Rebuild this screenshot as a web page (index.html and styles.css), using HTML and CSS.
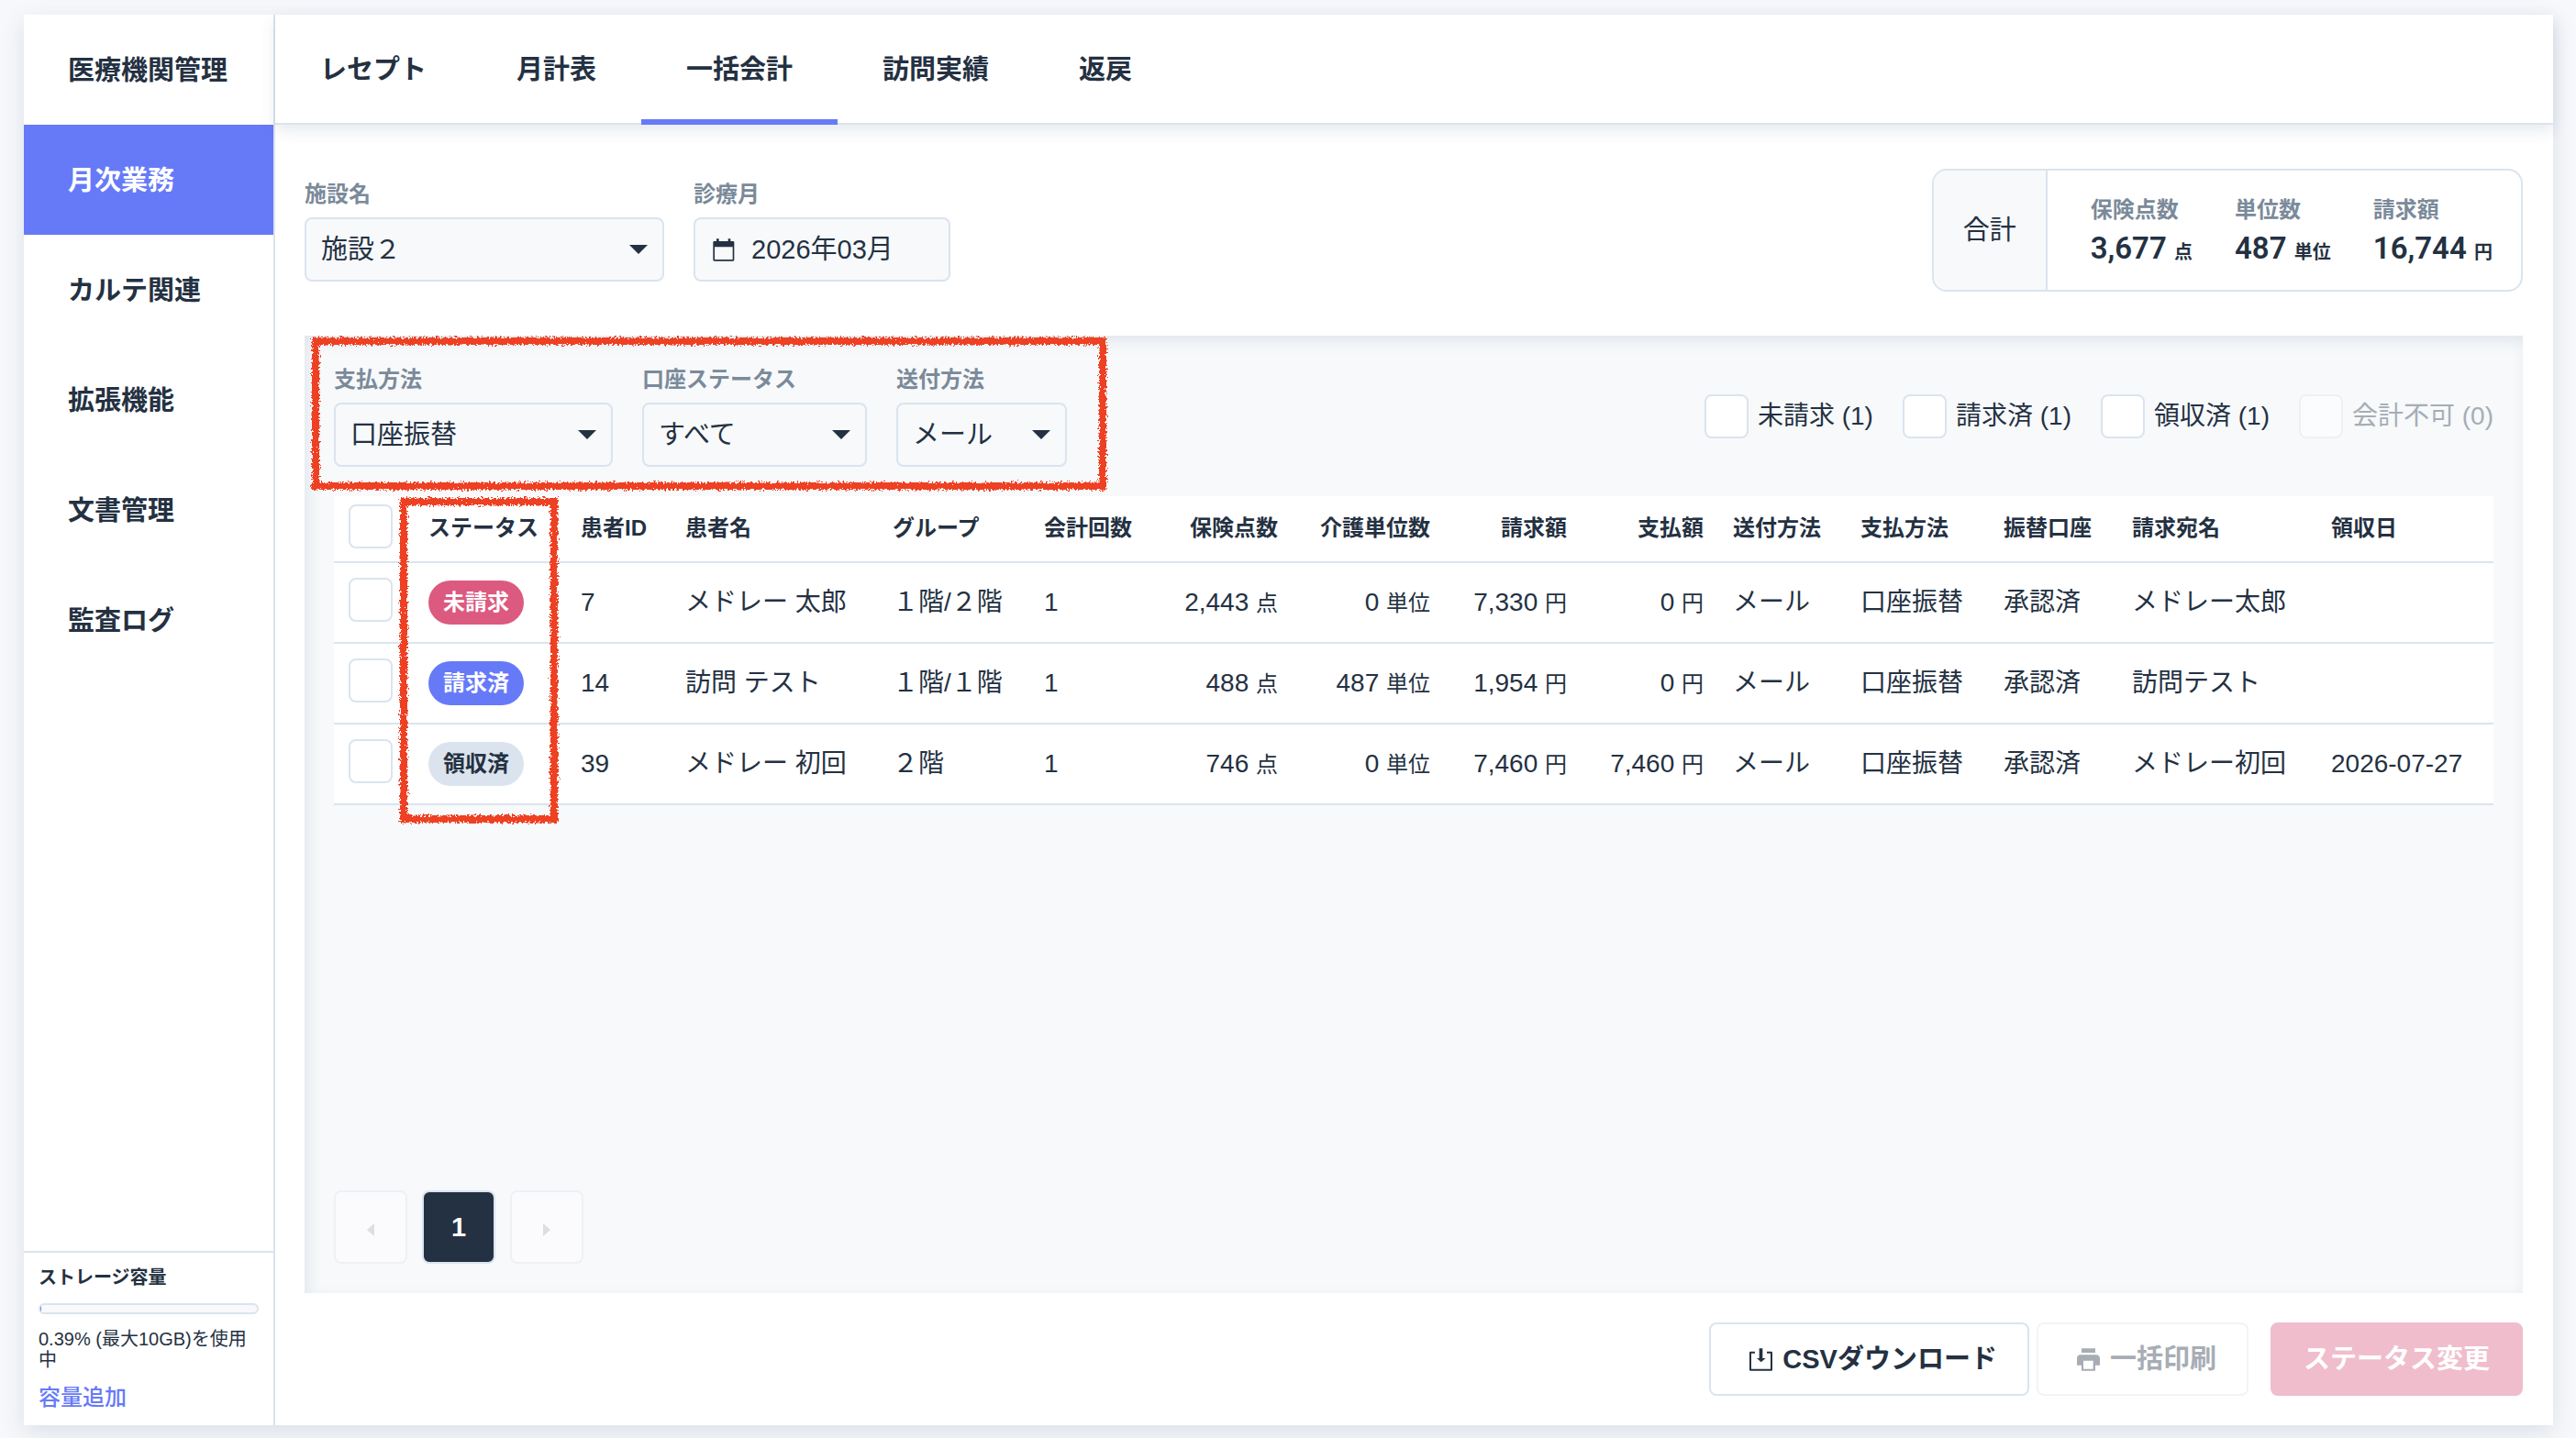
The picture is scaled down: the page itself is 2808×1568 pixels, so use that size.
FILE: index.html
```html
<!DOCTYPE html>
<html lang="ja">
<head>
<meta charset="utf-8">
<title>一括会計</title>
<link rel="stylesheet" href="styles.css">
</head>
<body>
<div class="app">
  <aside class="sidebar">
    <nav class="side-nav">
      <a href="#">医療機関管理</a>
      <a href="#" class="active">月次業務</a>
      <a href="#">カルテ関連</a>
      <a href="#">拡張機能</a>
      <a href="#">文書管理</a>
      <a href="#">監査ログ</a>
    </nav>
    <div class="storage">
      <div class="storage-title">ストレージ容量</div>
      <div class="bar"><div class="bar-fill" style="width:0.39%"></div></div>
      <p class="storage-text">0.39% (最大10GB)を使用中</p>
      <a href="#" class="storage-link">容量追加</a>
    </div>
  </aside>
  <div class="content">
    <nav class="tabs">
      <a href="#">レセプト</a>
      <a href="#">月計表</a>
      <a href="#" class="active">一括会計</a>
      <a href="#">訪問実績</a>
      <a href="#">返戻</a>
    </nav>
    <main class="main">
      <div class="top">
        <div class="filters">
          <div class="field facility">
            <label for="facility">施設名</label>
            <div class="select"><select id="facility"><option>施設２</option></select></div>
          </div>
          <div class="field month">
            <label for="month">診療月</label>
            <div class="date">
              <svg width="24" height="25" viewBox="0 0 72 75"><path fill="currentColor" fill-rule="evenodd" d="M4 9h8V1h8v8h30V1h8v8h8q4 0 4 4v57q0 4-4 4H5q-4 0-4-4V13q0-4 3-4zM6 28v41h59V28z"/></svg>
              <input id="month" type="text" value="2026年03月">
            </div>
          </div>
        </div>
        <section class="summary">
          <div class="summary-title">合計</div>
          <dl class="stats">
            <div><dt>保険点数</dt><dd>3,677 <small>点</small></dd></div>
            <div><dt>単位数</dt><dd>487 <small>単位</small></dd></div>
            <div><dt>請求額</dt><dd>16,744 <small>円</small></dd></div>
          </dl>
        </section>
      </div>
      <section class="panel">
        <div class="panel-head">
          <div class="filters marked">
            <div class="field pay">
              <label for="pay">支払方法</label>
              <div class="select"><select id="pay"><option>口座振替</option></select></div>
            </div>
            <div class="field account">
              <label for="account">口座ステータス</label>
              <div class="select"><select id="account"><option>すべて</option></select></div>
            </div>
            <div class="field send">
              <label for="send">送付方法</label>
              <div class="select"><select id="send"><option>メール</option></select></div>
            </div>
            <svg class="mark mark-filters"><rect class="crayon" x="6" y="6" width="858" height="158"/></svg>
          </div>
          <div class="checks">
            <label><input type="checkbox">未請求 (1)</label>
            <label><input type="checkbox">請求済 (1)</label>
            <label><input type="checkbox">領収済 (1)</label>
            <label class="off"><input type="checkbox" disabled>会計不可 (0)</label>
          </div>
        </div>
        <div class="table-wrap">
        <table>
          <colgroup>
            <col class="c-check"><col class="c-status"><col class="c-id"><col class="c-name"><col class="c-group"><col class="c-count"><col class="c-point"><col class="c-unit"><col class="c-bill"><col class="c-paid"><col class="c-send"><col class="c-method"><col class="c-account"><col class="c-to"><col class="c-date">
          </colgroup>
          <thead>
            <tr><th><input type="checkbox" aria-label="すべて選択"></th><th>ステータス</th><th>患者ID</th><th>患者名</th><th>グループ</th><th>会計回数</th><th class="num">保険点数</th><th class="num">介護単位数</th><th class="num">請求額</th><th class="num">支払額</th><th>送付方法</th><th>支払方法</th><th>振替口座</th><th>請求宛名</th><th>領収日</th></tr>
          </thead>
          <tbody>
            <tr><td><input type="checkbox" aria-label="選択"></td><td><span class="pill unbilled">未請求</span></td><td>7</td><td>メドレー 太郎</td><td>１階/２階</td><td>1</td><td class="num">2,443 <small>点</small></td><td class="num">0 <small>単位</small></td><td class="num">7,330 <small>円</small></td><td class="num">0 <small>円</small></td><td>メール</td><td>口座振替</td><td>承認済</td><td>メドレー太郎</td><td></td></tr>
            <tr><td><input type="checkbox" aria-label="選択"></td><td><span class="pill billed">請求済</span></td><td>14</td><td>訪問 テスト</td><td>１階/１階</td><td>1</td><td class="num">488 <small>点</small></td><td class="num">487 <small>単位</small></td><td class="num">1,954 <small>円</small></td><td class="num">0 <small>円</small></td><td>メール</td><td>口座振替</td><td>承認済</td><td>訪問テスト</td><td></td></tr>
            <tr><td><input type="checkbox" aria-label="選択"></td><td><span class="pill received">領収済</span></td><td>39</td><td>メドレー 初回</td><td>２階</td><td>1</td><td class="num">746 <small>点</small></td><td class="num">0 <small>単位</small></td><td class="num">7,460 <small>円</small></td><td class="num">7,460 <small>円</small></td><td>メール</td><td>口座振替</td><td>承認済</td><td>メドレー初回</td><td>2026-07-27</td></tr>
          </tbody>
        </table>
        <svg class="mark mark-status"><rect class="crayon" x="6" y="6" width="164" height="346"/></svg>
        </div>
        <div class="pager">
          <button type="button" disabled aria-label="前へ"><svg width="8" height="14" viewBox="0 0 8 14"><path fill="currentColor" d="M8 0v14L0 7z"/></svg></button>
          <button type="button" class="current">1</button>
          <button type="button" disabled aria-label="次へ"><svg width="8" height="14" viewBox="0 0 8 14"><path fill="currentColor" d="M0 0v14l8-7z"/></svg></button>
        </div>
      </section>
      <div class="actions">
        <button type="button" class="btn"><svg width="25" height="25" viewBox="0 0 75 75"><path fill="none" stroke="currentColor" stroke-width="6" stroke-linejoin="round" d="M18 14H3v57h69V14H57"/><path fill="currentColor" d="M32 1h11v32h10L38 46 24 33h8z"/></svg>CSVダウンロード</button>
        <button type="button" class="btn" disabled><svg width="25" height="25" viewBox="0 0 75 75"><path fill="currentColor" fill-rule="evenodd" d="M15 1h45v14H15zM12 22h51q12 0 12 12v22H60v18H15V56H0V34q0-12 12-12zm9 19v27h32V41z"/></svg>一括印刷</button>
        <button type="button" class="btn primary" disabled>ステータス変更</button>
      </div>
    </main>
  </div>
</div>
<svg class="defs" width="0" height="0"><filter id="rough" x="-5%" y="-5%" width="110%" height="110%"><feTurbulence type="fractalNoise" baseFrequency="0.45" numOctaves="3" seed="4"/><feDisplacementMap in="SourceGraphic" scale="8" xChannelSelector="R" yChannelSelector="G"/></filter></svg>
</body>
</html>
```
FILE: styles.css
```css
:root {
  --ink: #243142;
  --muted: #7b8a9a;
  --line: #dbe4ee;
  --soft: #f7f9fb;
  --blue: #667af8;
  --pink: #dc5a7f;
}
* { box-sizing: border-box; }
body {
  margin: 0;
  min-height: 100vh;
  padding: 16px 26px 14px;
  display: flex;
  background: #f7f8fb;
  color: var(--ink);
  font: 29px/1.2 "Liberation Sans", "Noto Sans CJK JP", sans-serif;
}
a { color: inherit; text-decoration: none; }
button, input, select { font: inherit; color: inherit; }
.app {
  flex: 1;
  display: flex;
  background: #fff;
  box-shadow: 0 8px 24px rgba(36, 70, 110, .13);
}
.sidebar {
  width: 274px;
  flex: none;
  display: flex;
  flex-direction: column;
  justify-content: space-between;
  border-right: 2px solid var(--line);
}
.side-nav a {
  display: flex;
  align-items: center;
  height: 120px;
  padding: 3px 0 0 48px;
  font-weight: 600;
}
.side-nav a.active { background: var(--blue); color: #fff; }
.storage {
  padding: 16px;
  border-top: 2px solid var(--line);
  font-size: 20px;
  line-height: 23px;
}
.storage-title { font-weight: 600; }
.bar {
  height: 12px;
  margin: 16px 0;
  border: 2px solid var(--line);
  border-radius: 6px;
  background: var(--soft);
  overflow: hidden;
}
.bar-fill { height: 100%; background: var(--blue); }
.storage-text { margin: 0 0 14px; }
.storage-link { display: block; font-size: 24px; line-height: 29px; font-weight: 500; color: var(--blue); }
.content { flex: 1; min-width: 0; display: flex; flex-direction: column; }
.tabs {
  display: flex;
  height: 120px;
  border-bottom: 2px solid var(--line);
  box-shadow: 0 6px 16px rgba(36, 70, 110, .12);
}
.tabs a {
  display: flex;
  align-items: center;
  height: 120px;
  padding: 6px 49px 0;
  border-bottom: 6px solid transparent;
  font-weight: 600;
}
.tabs a.active { border-color: var(--blue); }
.main {
  flex: 1;
  display: flex;
  flex-direction: column;
  padding: 48px 33px 32px 32px;
}
.top { display: flex; justify-content: space-between; align-items: flex-start; margin-bottom: 48px; }
.filters { display: flex; gap: 32px; }
.top .filters { padding-top: 12px; }
.field label {
  display: block;
  padding-top: 1px;
  margin-bottom: 11px;
  font-size: 24px;
  line-height: 29px;
  font-weight: 600;
  color: var(--muted);
}
.facility { width: 392px; }
.month { width: 280px; }
.pay { width: 304px; }
.account { width: 245px; }
.send { width: 186px; }
.select { position: relative; }
.select::after {
  content: "";
  position: absolute;
  right: 18px;
  top: 30px;
  border: 10px solid transparent;
  border-top-color: var(--ink);
  border-bottom: 0;
  pointer-events: none;
}
.select select {
  display: block;
  appearance: none;
  width: 100%;
  height: 70px;
  padding: 0 16px;
  border: 2px solid var(--line);
  border-radius: 8px;
  background: var(--soft);
}
.date {
  display: flex;
  align-items: center;
  gap: 18px;
  height: 70px;
  padding: 0 19px;
  border: 2px solid var(--line);
  border-radius: 8px;
  background: var(--soft);
}
.date svg { flex: none; }
.date input { width: 100%; min-width: 0; border: 0; padding: 0; background: none; }
.summary {
  display: flex;
  height: 134px;
  border: 2px solid var(--line);
  border-radius: 16px;
  overflow: hidden;
}
.summary-title {
  display: flex;
  align-items: center;
  padding: 0 32px;
  border-right: 2px solid var(--line);
  background: var(--soft);
}
.stats { display: flex; gap: 46px; margin: 0; padding: 28px 31px 0 47px; }
.stats dt { font-size: 24px; line-height: 29px; font-weight: 600; color: var(--muted); }
.stats dd { margin: 9px 0 0; font-family: Roboto, "Noto Sans CJK JP", sans-serif; font-weight: 600; font-size: 33px; line-height: 38px; }
.stats small { font-size: 20px; }
.panel {
  flex: 1;
  display: flex;
  flex-direction: column;
  padding: 32px;
  background: var(--soft);
  box-shadow: inset 4px 6px 16px rgba(36, 70, 110, .1);
}
.panel-head { display: flex; justify-content: space-between; align-items: center; margin-bottom: 32px; }
.marked { position: relative; }
.mark { position: absolute; overflow: visible; pointer-events: none; }
.mark-filters { left: -26px; top: -32px; width: 870px; height: 170px; }
.mark-status { left: 70px; top: 0; width: 176px; height: 358px; }
.crayon { fill: none; stroke: #ee4023; stroke-width: 8; filter: url(#rough); }
.defs { position: absolute; }
.checks { display: flex; gap: 32px; font-size: 28px; }
.checks label { display: flex; align-items: center; gap: 10px; }
.off { color: #a6adb5; }
input[type="checkbox"] {
  display: block;
  appearance: none;
  width: 48px;
  height: 48px;
  margin: 0;
  border: 2px solid var(--line);
  border-radius: 8px;
  background: #fff;
}
input[type="checkbox"]:disabled { border-color: #edf1f6; background: #fbfcfd; }
.table-wrap { position: relative; }
table { width: 100%; table-layout: fixed; border-collapse: collapse; background: #fff; }
th, td { padding: 0 16px; border-bottom: 2px solid var(--line); text-align: left; white-space: nowrap; }
th { height: 72px; font-size: 24px; font-weight: 600; }
td { height: 88px; font-size: 28px; }
td small { font-size: 24px; }
th:first-child, td:first-child { padding-bottom: 6px; }
.num { text-align: right; }
.c-check { width: 87px; } .c-status { width: 166px; } .c-id { width: 114px; }
.c-name { width: 226px; } .c-group { width: 165px; } .c-count { width: 128px; }
.c-point { width: 159px; } .c-unit { width: 166px; } .c-bill { width: 149px; }
.c-paid { width: 149px; } .c-send { width: 139px; } .c-method { width: 156px; }
.c-account { width: 140px; } .c-to { width: 217px; } .c-date { width: 193px; }
.pill {
  display: inline-flex;
  align-items: center;
  height: 48px;
  padding: 0 16px;
  border-radius: 24px;
  font-size: 24px;
  font-weight: 600;
  color: #fff;
  vertical-align: middle;
}
.unbilled { background: var(--pink); }
.billed { background: var(--blue); }
.received { background: var(--line); color: var(--ink); }
.pager { display: flex; gap: 16px; margin-top: auto; }
.pager button {
  width: 80px;
  height: 80px;
  padding: 0;
  border: 2px solid var(--line);
  border-radius: 8px;
  background: #fff;
  font-weight: 600;
}
.pager button:disabled { border-color: #edf1f6; background: #fbfbfd; color: #dcdee1; }
.pager .current { background: var(--ink); color: #fff; }
.actions { display: flex; justify-content: flex-end; gap: 8px; margin-top: 32px; }
.btn {
  display: flex;
  align-items: center;
  gap: 11px;
  height: 80px;
  padding: 0 33px 0 42px;
  border: 2px solid var(--line);
  border-radius: 8px;
  background: #fff;
  font-weight: 600;
}
.btn:disabled { border-color: #f0f4f9; color: #a7adb5; }
.btn.primary { margin-left: 16px; padding: 0 34px; border-color: #f0bdcd; background: #f0bdcd; color: #fff; }
```
